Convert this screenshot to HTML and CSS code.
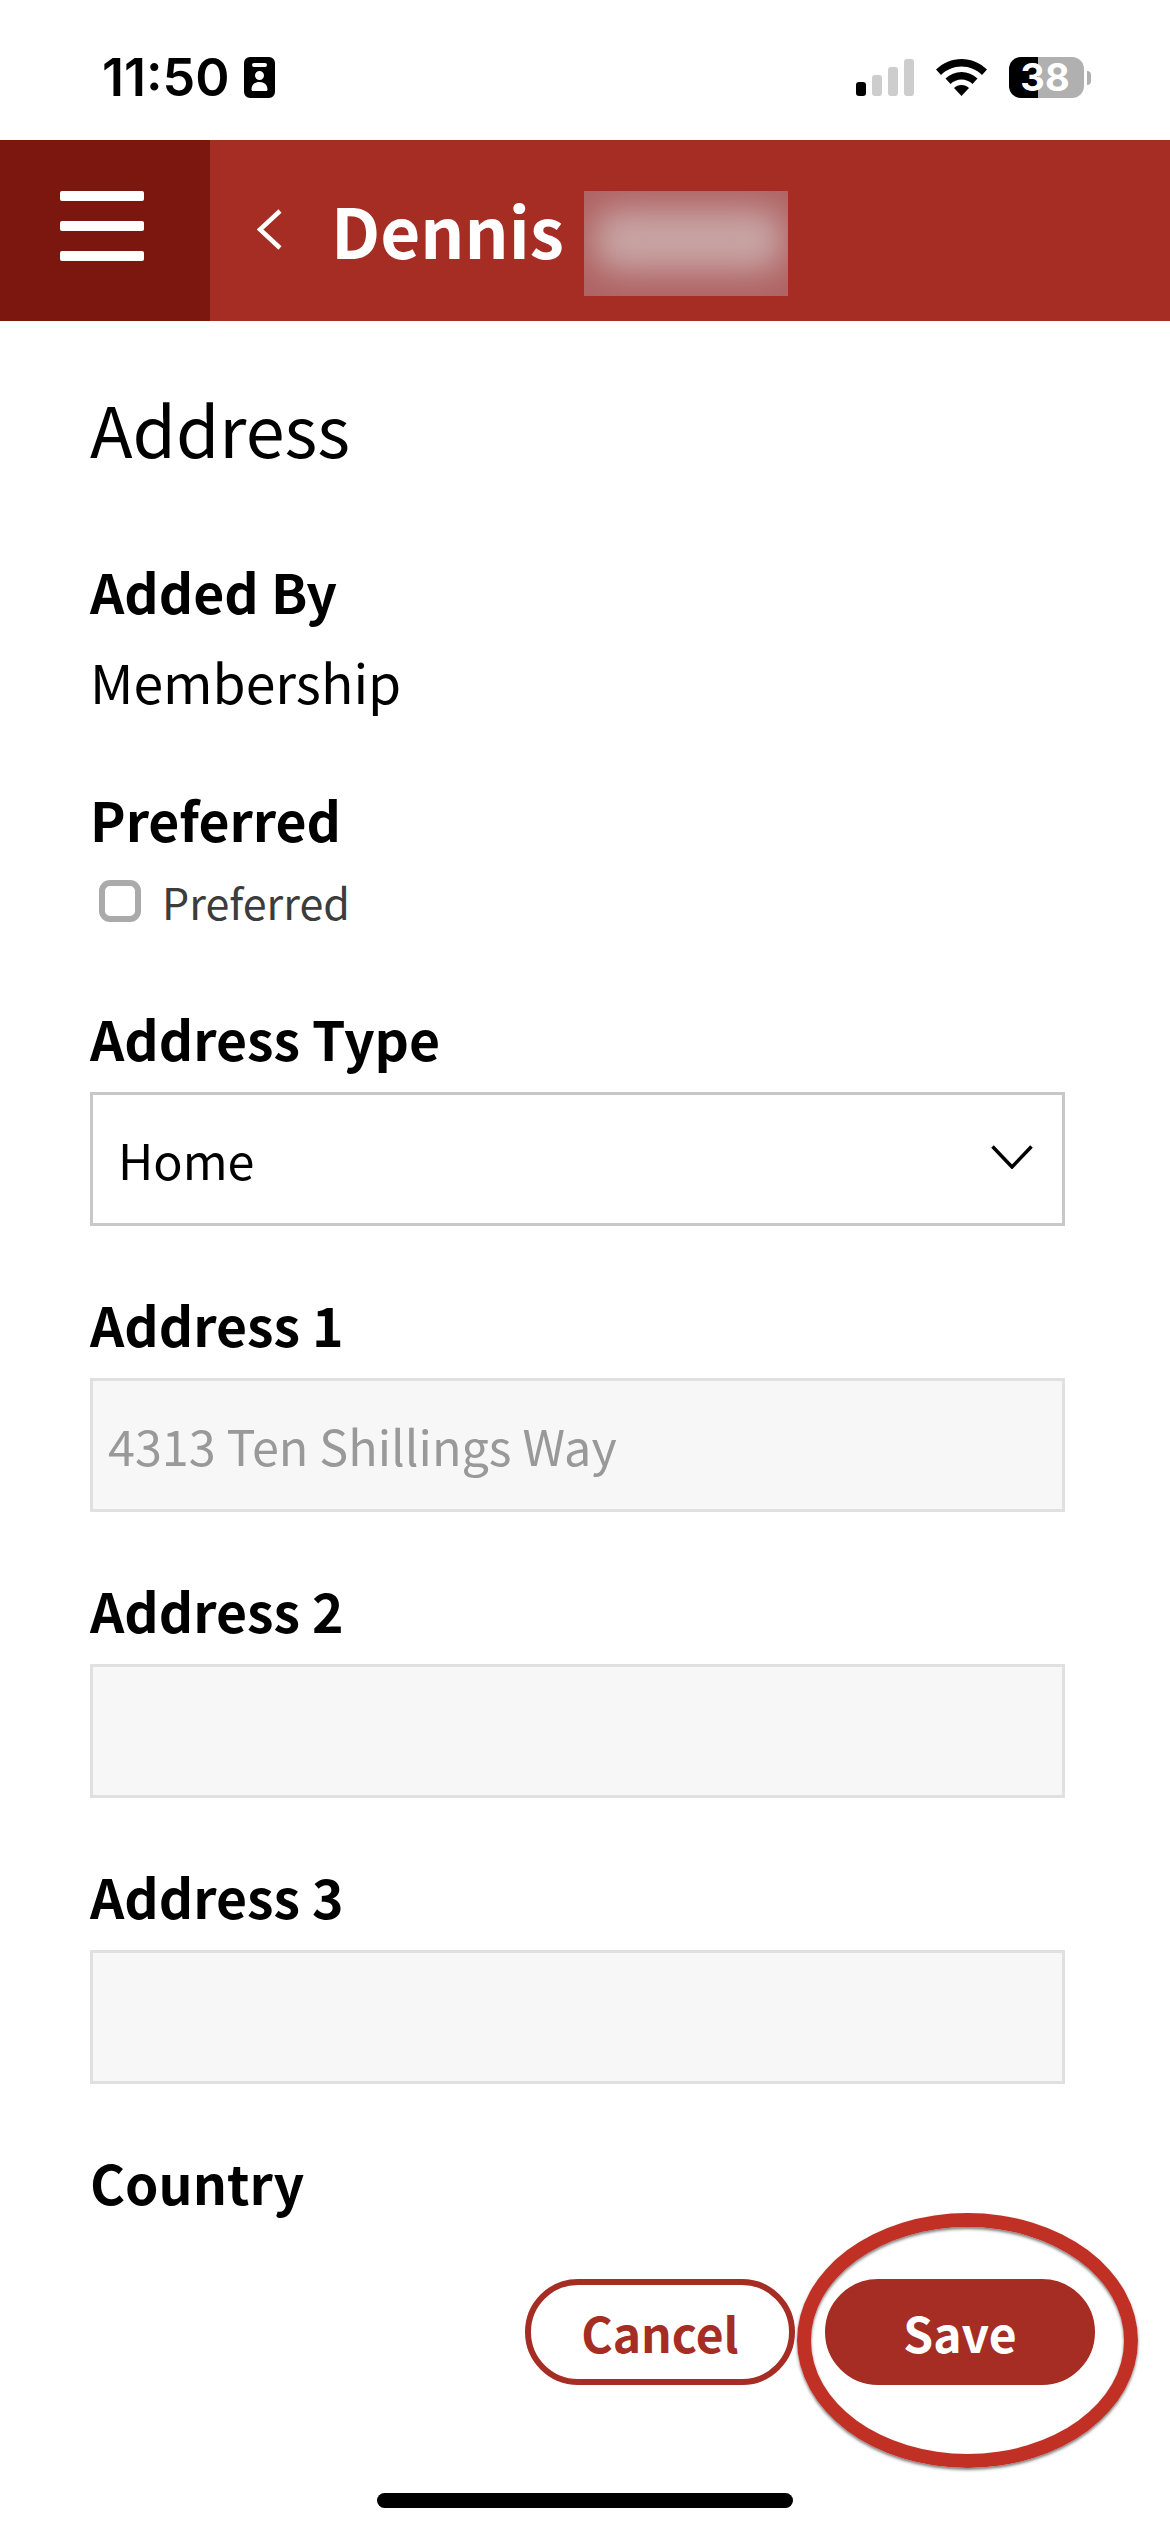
FILE: index.html
```html
<!DOCTYPE html>
<html lang="en">

<head>
    <meta charset="UTF-8">
    <meta name="viewport" content="width=device-width, initial-scale=1.0">
    <title>Address</title>
    <link rel="stylesheet" href="styles.css">
</head>

<body>

    <div class="phone">
        <div class="status-bar">
            <div class="status-left">
                <span class="time">11:50</span>
                <svg class="id-icon" viewBox="0 0 31 41">
                    <path fill-rule="evenodd" d="M6 0h19a6 6 0 0 1 6 6v29a6 6 0 0 1-6 6H6a6 6 0 0 1-6-6V6a6 6 0 0 1 6-6zM10 6a1.500 1.500 0 0 0 0 4h11a1.500 1.500 0 0 0 0-4zM15.500 14a4.500 4.500 0 1 0 0 9 4.500 4.500 0 0 0 0-9zM15.500 25c-5 0-8 3-8 7.500 0 .8.500 1.500 1.500 1.500h13c1 0 1.500-.7 1.500-1.500 0-4.500-3-7.500-8-7.500z" />
                </svg>
            </div>
            <div class="status-right">
                <div class="signal">
                    <span class="bar bar-on bar-1"></span>
                    <span class="bar bar-2"></span>
                    <span class="bar bar-3"></span>
                    <span class="bar bar-4"></span>
                </div>
                <svg class="wifi" viewBox="0 0 51 37">
                    <path d="M25.500 0C35 0 44 4 51 10.500l-5 5.500C40.500 10.500 33 7.500 25.500 7.500S10.500 10.500 5 16L0 10.500C7 4 16 0 25.500 0z" />
                    <path d="M25.500 13c6 0 11.500 2.400 16 6.500l-5 5.500c-3-2.800-7-4.500-11-4.500s-8 1.700-11 4.500l-5-5.500c4.500-4.100 10-6.500 16-6.500z" />
                    <path d="M25.500 26c3 0 5.500 1 7.500 3l-7.500 8-7.500-8c2-2 4.500-3 7.500-3z" />
                </svg>
                <div class="battery">
                    <div class="battery-body">38</div>
                    <span class="battery-nub"></span>
                </div>
            </div>
        </div>

        <div class="header">
            <div class="menu-btn">
                <span class="menu-line"></span>
                <span class="menu-line"></span>
                <span class="menu-line"></span>
            </div>
            <svg class="back-icon" viewBox="0 0 25 41">
                <path d="M23 2 3 20.500 23 39" />
            </svg>
            <h1 class="member-name">Dennis</h1>
            <div class="blur-box"><span class="blur-inner"></span></div>
        </div>

        <div class="content">
            <h2 class="page-title">Address</h2>

            <div class="field-label">Added By</div>
            <div class="field-value">Membership</div>

            <div class="field-label label-preferred">Preferred</div>
            <div class="check-row">
                <span class="checkbox"></span>
                <span class="check-text">Preferred</span>
            </div>

            <div class="group group-type">
                <div class="field-label">Address Type</div>
                <div class="select">
                    <span>Home</span>
                    <svg class="chevron" viewBox="0 0 42 24">
                        <path d="M1.500 1.500 21 22 40.500 1.500" />
                    </svg>
                </div>
            </div>

            <div class="group">
                <div class="field-label">Address 1</div>
                <div class="input">4313 Ten Shillings Way</div>
            </div>

            <div class="group">
                <div class="field-label">Address 2</div>
                <div class="input"></div>
            </div>

            <div class="group">
                <div class="field-label">Address 3</div>
                <div class="input"></div>
            </div>

            <div class="group">
                <div class="field-label">Country</div>
            </div>
        </div>

        <div class="footer">
            <button class="btn btn-outline">Cancel</button>
            <button class="btn btn-solid">Save</button>
        </div>

        <div class="home-row">
            <span class="home-bar"></span>
        </div>

        <!-- annotation drawn over the screenshot -->
        <span class="highlight-ring"></span>
    </div>

</body>

</html>
```

FILE: styles.css
```css
* {
    margin: 0;
    padding: 0;
    box-sizing: border-box;
}

body {
    font-family: "Noto Sans CJK SC", "Noto Sans", sans-serif;
    background-color: white;
    color: black;
}

.phone {
    position: relative;
    width: 1170px;
    height: 2532px;
    display: flex;
    flex-direction: column;
    overflow: hidden;
}

/* status bar */
.status-bar {
    height: 140px;
    flex: none;
    display: flex;
    justify-content: space-between;
    padding: 57px 79px 0 102px;
}

.status-left {
    display: flex;
    align-items: flex-start;
    gap: 14px;
}

.time {
    font-family: Inter, "Liberation Sans", sans-serif;
    font-size: 52px;
    font-weight: 600;
    line-height: 41px;
}

.id-icon {
    width: 31px;
    height: 41px;
}

.status-right {
    display: flex;
    align-items: flex-start;
}

.signal {
    display: flex;
    align-items: flex-end;
    gap: 6px;
    height: 37px;
    margin-top: 2px;
}

.bar {
    width: 10px;
    border-radius: 3px;
    background-color: #cdcdcd;
}

.bar-on {
    background-color: black;
}

.bar-1 {
    height: 14px;
}

.bar-2 {
    height: 21px;
}

.bar-3 {
    height: 29px;
}

.bar-4 {
    height: 37px;
}

.wifi {
    width: 51px;
    height: 37px;
    margin: 2px 22px 0 22px;
}

.battery {
    display: flex;
    align-items: center;
    gap: 3px;
    height: 41px;
}

.battery-body {
    width: 75px;
    height: 41px;
    padding-right: 3px;
    border-radius: 12px;
    background: linear-gradient(to right, black 29px, #b0b0b0 29px);
    text-align: center;
    font-family: Inter, "Liberation Sans", sans-serif;
    font-size: 38px;
    font-weight: 700;
    line-height: 41px;
    color: white;
}

.battery-nub {
    width: 4px;
    height: 14px;
    border-radius: 0 4px 4px 0;
    background-color: #b0b0b0;
}

/* red header */
.header {
    height: 181px;
    flex: none;
    display: flex;
    align-items: center;
    background-color: #a52d24;
    color: white;
}

.menu-btn {
    width: 210px;
    height: 100%;
    display: flex;
    flex-direction: column;
    gap: 20px;
    padding: 51px 0 0 60px;
    background-color: #7c170f;
}

.menu-line {
    display: block;
    width: 84px;
    height: 10px;
    border-radius: 2px;
    background-color: white;
}

.back-icon {
    width: 25px;
    height: 41px;
    margin: -2px 49px 0 47px;
    fill: none;
    stroke: white;
    stroke-width: 4.500px;
}

.member-name {
    font-size: 69px;
    font-weight: 700;
    line-height: 100px;
    margin-top: -4px;
}

.blur-box {
    width: 204px;
    height: 105px;
    margin: 26px 0 0 20px;
    overflow: hidden;
    background-color: #b06464;
}

.blur-inner {
    display: block;
    width: 190px;
    height: 62px;
    margin: 18px 0 0 10px;
    border-radius: 24px;
    background-color: #c8a4a4;
    filter: blur(16px);
}

/* form */
.content {
    flex: 1;
    min-height: 0;
    overflow: hidden;
    padding: 0 105px 0 90px;
}

.page-title {
    font-size: 70px;
    font-weight: 400;
    line-height: 90px;
    margin: 62px 0 88px;
}

.field-label {
    font-size: 53.500px;
    font-weight: 700;
    line-height: 60px;
}

.field-value {
    font-size: 53.500px;
    line-height: 60px;
    margin-top: 30px;
}

.label-preferred {
    margin-top: 78px;
}

.check-row {
    display: flex;
    align-items: center;
    gap: 21px;
    height: 42px;
    margin-top: 31px;
    padding-left: 9px;
}

.checkbox {
    width: 42px;
    height: 42px;
    border: 6px solid #aaaaaa;
    border-radius: 11px;
}

.check-text {
    font-size: 43px;
    line-height: 42px;
    color: #3c3c3c;
}

.group {
    margin-top: 68px;
}

.group-type {
    margin-top: 86px;
}

.select,
.input {
    height: 134px;
    margin-top: 24px;
    font-size: 48.500px;
    display: flex;
    align-items: center;
}

.select {
    justify-content: space-between;
    padding: 0 29px 0 25px;
    border: 3px solid #c8c8c8;
}

.chevron {
    width: 42px;
    height: 24px;
    margin-top: -4px;
    fill: none;
    stroke: black;
    stroke-width: 3.500px;
}

.input {
    padding: 0 15px;
    border: 3px solid #e0e0e0;
    background-color: #f7f7f7;
    color: #999999;
}

/* bottom buttons */
.footer {
    flex: none;
    display: flex;
    justify-content: flex-end;
    gap: 30px;
    padding: 0 75px;
    margin-bottom: 108px;
}

.btn {
    width: 270px;
    height: 106px;
    border-radius: 53px;
    border: 6px solid #a52d24;
    font-family: inherit;
    font-size: 48px;
    font-weight: 700;
}

.btn-outline {
    background-color: white;
    color: #a52d24;
}

.btn-solid {
    background-color: #a52d24;
    color: white;
}

.home-row {
    flex: none;
    display: flex;
    justify-content: center;
    height: 39px;
}

.home-bar {
    display: block;
    width: 416px;
    height: 15px;
    border-radius: 8px;
    background-color: black;
}

.highlight-ring {
    position: absolute;
    left: 797px;
    top: 2213px;
    width: 341px;
    height: 255px;
    border: 14px solid #c03024;
    border-radius: 50%;
    box-shadow: 0 2px 3px rgba(0, 0, 0, 0.5), inset 0 2px 3px rgba(0, 0, 0, 0.5);
}
```
